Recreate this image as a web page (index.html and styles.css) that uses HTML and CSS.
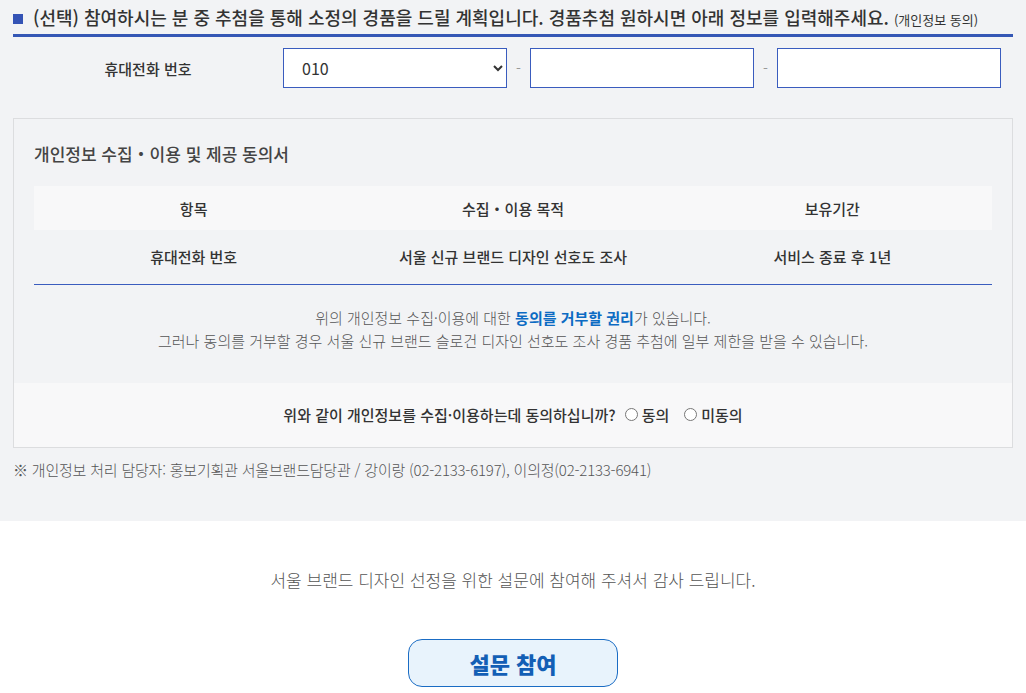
FILE: index.html
```html
<!DOCTYPE html>
<html lang="ko">
<head>
    <meta charset="UTF-8">
    <meta name="viewport" content="width=device-width, initial-scale=1.0">
    <title>설문 참여</title>
    <link rel="stylesheet" href="styles.css">
</head>
<body>
    <div class="survey">
        <h2 class="survey-title">(선택) 참여하시는 분 중 추첨을 통해 소정의 경품을 드릴 계획입니다. 경품추첨 원하시면 아래 정보를 입력해주세요. <small>(개인정보 동의)</small></h2>

        <div class="phone-row">
            <label class="phone-label" for="phone1">휴대전화 번호</label>
            <select id="phone1" class="phone-input">
                <option>010</option>
                <option>011</option>
                <option>016</option>
                <option>017</option>
                <option>018</option>
                <option>019</option>
            </select>
            <span class="dash">-</span>
            <input type="text" class="phone-input" maxlength="4">
            <span class="dash">-</span>
            <input type="text" class="phone-input" maxlength="4">
        </div>

        <div class="agree-box">
            <div class="agree-inner">
                <h3 class="agree-title">개인정보 수집・이용 및 제공 동의서</h3>
                <table class="agree-table">
                    <thead>
                        <tr>
                            <th>항목</th>
                            <th>수집・이용 목적</th>
                            <th>보유기간</th>
                        </tr>
                    </thead>
                    <tbody>
                        <tr>
                            <td>휴대전화 번호</td>
                            <td>서울 신규 브랜드 디자인 선호도 조사</td>
                            <td>서비스 종료 후 1년</td>
                        </tr>
                    </tbody>
                </table>
                <p class="agree-notice">
                    위의 개인정보 수집·이용에 대한 <strong>동의를 거부할 권리</strong>가 있습니다.<br>
                    그러나 동의를 거부할 경우 서울 신규 브랜드 슬로건 디자인 선호도 조사 경품 추첨에 일부 제한을 받을 수 있습니다.
                </p>
            </div>
            <div class="agree-question">
                위와 같이 개인정보를 수집·이용하는데 동의하십니까?
                <label><input type="radio" name="agree"> 동의</label>
                <label><input type="radio" name="agree"> 미동의</label>
            </div>
        </div>

        <p class="manager">※ 개인정보 처리 담당자: 홍보기획관 서울브랜드담당관 / 강이랑 (02-2133-6197), 이의정(02-2133-6941)</p>
    </div>

    <div class="thanks">
        <p>서울 브랜드 디자인 선정을 위한 설문에 참여해 주셔서 감사 드립니다.</p>
        <button type="button" class="btn-join">설문 참여</button>
    </div>
</body>
</html>
```

FILE: styles.css
```css
*{
    padding: 0;
    margin: 0;
    box-sizing: border-box;
}

body{
    font-family: "Noto Sans CJK KR", "Noto Sans", sans-serif;
    color: #333;
    background: #fff;
}

.survey {
    background: #f2f3f5;
    padding: 0 13px 40px;
}

.survey-title {
    font-size: 18px;
    font-weight: 500;
    line-height: 26px;
    color: #333;
    padding: 4px 0 4px;
    border-bottom: 3px solid #3557b5;
}

.survey-title::before {
    content: "";
    display: inline-block;
    width: 10px;
    height: 10px;
    background: #3453b5;
    margin-right: 10px;
    vertical-align: 1px;
}

.survey-title small {
    font-size: 13px;
    font-weight: 400;
    line-height: 1;
}

.phone-row {
    display: flex;
    align-items: center;
    margin-top: 11px;
    height: 40px;
}

.phone-label {
    width: 270px;
    text-align: center;
    font-size: 15px;
    font-weight: 500;
}

.phone-input {
    width: 224px;
    height: 40px;
    border: 1px solid #3a5cbe;
    border-radius: 0;
    background: #fff;
    font-family: inherit;
    font-size: 16px;
    color: #333;
    padding: 0 10px 0 14px;
    outline: none;
}

.dash {
    width: 23px;
    text-align: center;
    color: #999;
    font-size: 14px;
}

.agree-box {
    margin-top: 30px;
    border: 1px solid #dcdddf;
}

.agree-inner {
    padding: 23px 20px 31px;
}

.agree-title {
    font-size: 17px;
    font-weight: 500;
    line-height: 24px;
    color: #444;
    margin-bottom: 20px;
}

.agree-table {
    width: 100%;
    border-collapse: collapse;
    table-layout: fixed;
    font-size: 15px;
    color: #333;
}

.agree-table th {
    background: #f8f8f9;
    height: 44px;
    font-weight: 500;
}

.agree-table td {
    height: 54px;
    text-align: center;
    font-weight: 500;
    border-bottom: 1px solid #3a5cbe;
}

.agree-notice {
    margin-top: 21px;
    text-align: center;
    font-size: 15px;
    font-weight: 300;
    line-height: 23px;
    color: #555;
}

.agree-notice strong {
    color: #0c6bc3;
    font-weight: 700;
}

.agree-question {
    background: #f8f8f9;
    height: 64px;
    display: flex;
    justify-content: center;
    align-items: center;
    font-size: 15px;
    font-weight: 500;
    color: #333;
}

.agree-question label {
    display: flex;
    align-items: center;
    margin-left: 9px;
}

.agree-question label + label {
    margin-left: 15px;
}

.agree-question input {
    width: 13px;
    height: 13px;
    margin: 0 4px 0 0;
}

.manager {
    margin-top: 11px;
    font-size: 15px;
    font-weight: 300;
    line-height: 22px;
    color: #555;
    letter-spacing: -0.2px;
}

.thanks {
    text-align: center;
    padding-top: 47px;
}

.thanks p {
    font-size: 17px;
    font-weight: 300;
    line-height: 24px;
    color: #555;
}

.btn-join {
    margin-top: 47px;
    width: 210px;
    height: 48px;
    border: 1px solid #1a6cc4;
    border-radius: 14px;
    background: #e8f3fc;
    color: #135fb5;
    font-family: inherit;
    font-size: 22px;
    font-weight: 900;
    cursor: pointer;
}

.btn-join:hover{
    background: #d6e9fa;
}
```
